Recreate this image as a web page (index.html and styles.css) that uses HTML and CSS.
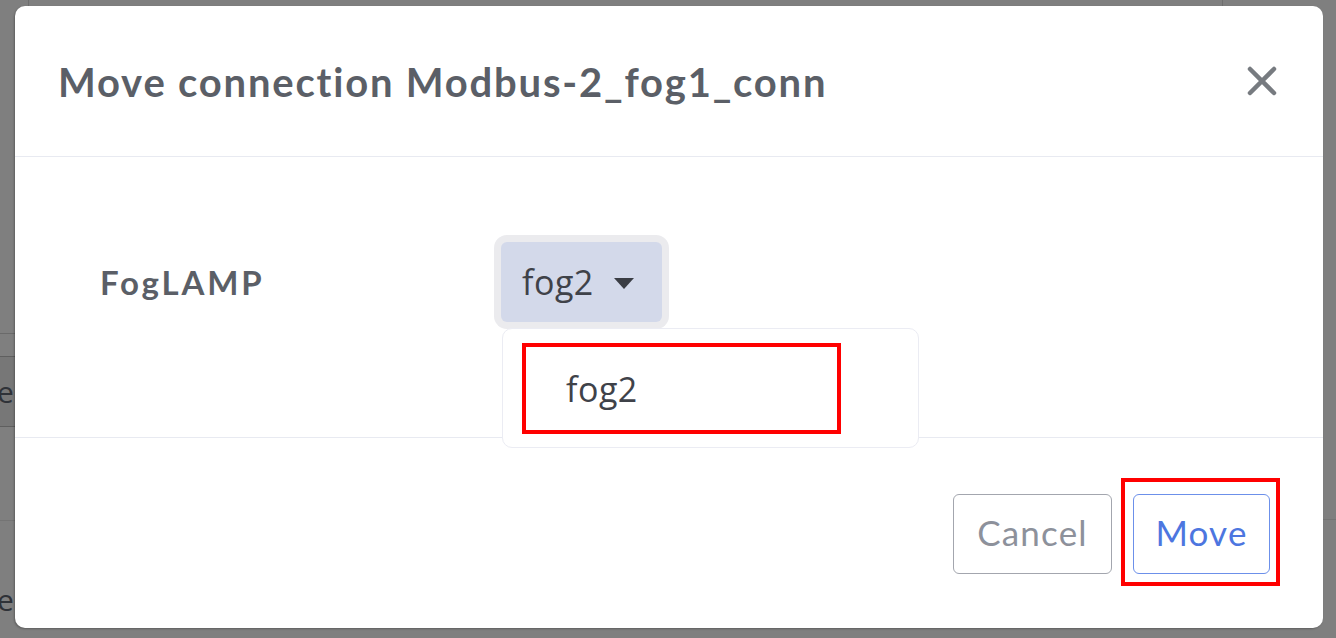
FILE: index.html
```html
<!DOCTYPE html>
<html lang="en">
	<head>
		<meta charset="UTF-8" />
		<meta name="viewport" content="width=device-width, initial-scale=1.0" />
		<title>Move connection</title>
		<link rel="stylesheet" href="styles.css">
	</head>
	<body>
		<!-- page behind the overlay, only its edges show -->
		<div class="backdrop">
			<div class="bg-col bg-col-left"></div>
			<div class="bg-col bg-col-right"></div>
			<div class="bg-table">
				<div class="bg-row bg-row-head"></div>
				<div class="bg-row bg-row-active"><span>e</span></div>
				<div class="bg-row bg-row-plain"></div>
				<div class="bg-row bg-row-last"><span>e</span></div>
			</div>
			<div class="bg-rule"></div>
		</div>

		<section class="modal" role="dialog">
			<header class="modal-header">
				<h1 class="modal-title">Move connection Modbus-2_fog1_conn</h1>
				<button class="modal-close" aria-label="Close">
					<svg width="30" height="30" viewBox="0 0 30 30">
						<path d="M3 3 L27 27 M27 3 L3 27" stroke="#777b80" stroke-width="4.5" stroke-linecap="round" fill="none" />
					</svg>
				</button>
			</header>
			<div class="modal-body">
				<label class="field-label">FogLAMP</label>
				<div class="dropdown">
					<button class="dropdown-toggle">
						fog2
						<svg class="caret" width="20" height="11" viewBox="0 0 20 11">
							<path d="M0 0 H20 L10 11 Z" fill="#3a3d44" />
						</svg>
					</button>
					<ul class="dropdown-menu">
						<li class="dropdown-item marked">fog2</li>
					</ul>
				</div>
			</div>
			<footer class="modal-footer">
				<button class="btn btn-cancel">Cancel</button>
				<button class="btn btn-move marked-btn">Move</button>
			</footer>
		</section>
	</body>
</html>
```

FILE: styles.css
```css
* {
	box-sizing: border-box;
}
body {
	margin: 0;
	width: 1336px;
	height: 638px;
	overflow: hidden;
	background: #7f7f7f;
	font-family: Lato, "Open Sans", sans-serif;
	position: relative;
}
/* page behind the overlay */
.backdrop {
	position: absolute;
	inset: 0;
}
.bg-col {
	position: absolute;
	top: 0;
	height: 8px;
	width: 1px;
	background: #6e6e6e;
}
.bg-col-left {
	left: 28px;
}
.bg-col-right {
	left: 1222px;
}
.bg-table {
	position: absolute;
	left: 0;
	top: 333px;
	width: 20px;
}
.bg-row {
	border-top: 1px solid #6a6a6a;
	font-family: "Open Sans", sans-serif;
	font-size: 30px;
	color: #2f3238;
	line-height: 1;
	overflow: hidden;
}
.bg-row-head {
	height: 23px;
}
.bg-row-active {
	height: 71px;
	background: #777;
	border-top-color: #5f5f5f;
	border-bottom: 1px solid #5f5f5f;
	padding-top: 20px;
}
.bg-row-plain {
	height: 93px;
	border-top: none;
}
.bg-row-last {
	height: 100px;
	padding-top: 64px;
	border-top-color: #747474;
}
.bg-row span {
	display: block;
	margin-left: -3px;
}
.bg-rule {
	position: absolute;
	right: 0;
	top: 519px;
	width: 14px;
	height: 1px;
	background: #747474;
}

/* dialog */
.modal {
	position: absolute;
	left: 15px;
	top: 6px;
	width: 1308px;
	height: 622px;
	background: #fff;
	border-radius: 10px;
	box-shadow: -1px 1px 2px rgba(0, 0, 0, 0.25);
	display: flex;
	flex-direction: column;
}
.modal-header {
	height: 151px;
	display: flex;
	align-items: center;
	justify-content: space-between;
	padding: 0 44px 0 43px;
	border-bottom: 1px solid #e8eaf1;
}
.modal-title {
	margin: 0 0 -2px;
	font-size: 40px;
	font-weight: 700;
	color: #5b5f67;
	letter-spacing: 1.8px;
}
.modal-close {
	border: none;
	background: none;
	padding: 0;
	width: 34px;
	height: 34px;
	display: flex;
	align-items: center;
	justify-content: center;
}
.modal-body {
	height: 281px;
	display: flex;
	align-items: flex-start;
	padding: 85px 0 0 85px;
	border-bottom: 1px solid #e8eaf1;
}
.field-label {
	width: 401px;
	font-size: 33px;
	font-weight: 700;
	color: #5b5f67;
	line-height: 80px;
	letter-spacing: 2.8px;
}
.dropdown {
	position: relative;
}
.dropdown-toggle {
	display: flex;
	align-items: center;
	gap: 20px;
	width: 161px;
	height: 80px;
	padding: 0 0 0 21px;
	border: none;
	border-radius: 6px;
	background: #d3d9ea;
	box-shadow: 0 0 0 7px #ebebee;
	font-family: "Open Sans", sans-serif;
	font-size: 34px;
	color: #3f4249;
	letter-spacing: 0.5px;
}
.caret {
	margin-top: 2px;
}
.dropdown-menu {
	position: absolute;
	left: 1px;
	top: 86px;
	width: 417px;
	height: 120px;
	margin: 0;
	padding: 14px 0 0 19px;
	list-style: none;
	background: #fff;
	border: 1px solid #ebecf3;
	border-radius: 10px;
	z-index: 2;
}
.dropdown-item {
	width: 319px;
	height: 91px;
	padding-left: 40px;
	display: flex;
	align-items: center;
	font-family: "Open Sans", sans-serif;
	font-size: 34px;
	color: #3f4249;
	letter-spacing: 0.5px;
}
/* red annotation boxes */
.marked {
	border: 4px solid #ff0000;
}
.modal-footer {
	flex: 1;
	display: flex;
	align-items: center;
	justify-content: flex-end;
	gap: 21px;
	padding: 2px 53px 0 0;
}
.btn {
	height: 80px;
	border-radius: 6px;
	background: #fff;
	font-family: Lato, "Open Sans", sans-serif;
	font-size: 35px;
	letter-spacing: 1.2px;
	padding: 0 0 4px;
}
.btn-cancel {
	width: 159px;
	border: 1px solid #a3a6ae;
	color: #8d919b;
}
.btn-move {
	width: 137px;
	border: 1px solid #6c90ea;
	color: #4d76e0;
	position: relative;
}
.marked-btn::after {
	content: "";
	position: absolute;
	left: -13px;
	right: -11px;
	top: -17px;
	bottom: -13px;
	border: 4px solid #ff0000;
}
```
